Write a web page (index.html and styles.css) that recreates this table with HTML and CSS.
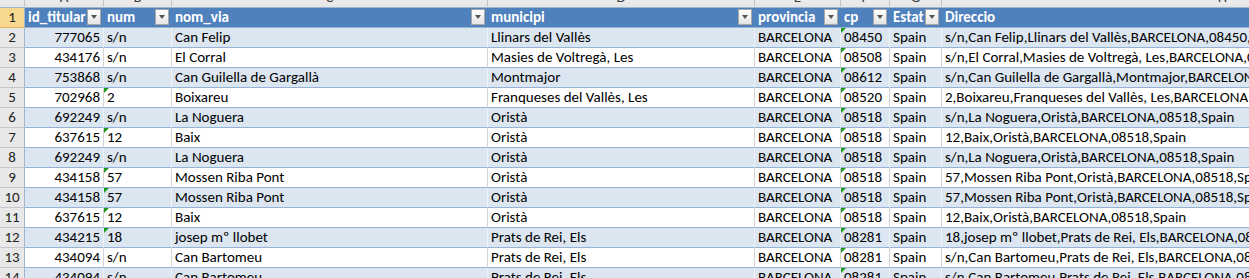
FILE: index.html
```html
<!DOCTYPE html>
<html>
<head>
<meta charset="utf-8">
<link rel="stylesheet" href="styles.css">
</head>
<body>
<div class="sheet">
  <div class="row colhead">
    <div class="corner"></div>
    <div class="ch">A</div><div class="ch">B</div><div class="ch">C</div><div class="ch">D</div>
    <div class="ch">E</div><div class="ch">F</div><div class="ch">G</div><div class="ch">H</div>
  </div>
  <div class="row hdr">
    <div class="rh sel">1</div>
    <div class="c th"><span>id_titular</span><span class="dd"></span></div>
    <div class="c th"><span>num</span><span class="dd"></span></div>
    <div class="c th"><span>nom_via</span><span class="dd"></span></div>
    <div class="c th"><span>municipi</span><span class="dd"></span></div>
    <div class="c th"><span>provincia</span><span class="dd"></span></div>
    <div class="c th"><span>cp</span><span class="dd"></span></div>
    <div class="c th"><span>Estat</span><span class="dd"></span></div>
    <div class="c th"><span>Direccio</span></div>
  </div>
  <div class="row band">
    <div class="rh">2</div><div class="c n">777065</div><div class="c">s/n</div><div class="c">Can Felip</div><div class="c">Llinars del Vallès</div><div class="c">BARCELONA</div><div class="c err">08450</div><div class="c">Spain</div><div class="c">s/n,Can Felip,Llinars del Vallès,BARCELONA,08450,Spain</div>
  </div>
  <div class="row">
    <div class="rh">3</div><div class="c n">434176</div><div class="c">s/n</div><div class="c">El Corral</div><div class="c">Masies de Voltregà, Les</div><div class="c">BARCELONA</div><div class="c err">08508</div><div class="c">Spain</div><div class="c">s/n,El Corral,Masies de Voltregà, Les,BARCELONA,08508,Spain</div>
  </div>
  <div class="row band">
    <div class="rh">4</div><div class="c n">753868</div><div class="c">s/n</div><div class="c">Can Guilella de Gargallà</div><div class="c">Montmajor</div><div class="c">BARCELONA</div><div class="c err">08612</div><div class="c">Spain</div><div class="c">s/n,Can Guilella de Gargallà,Montmajor,BARCELONA,08612,Spain</div>
  </div>
  <div class="row">
    <div class="rh">5</div><div class="c n">702968</div><div class="c err">2</div><div class="c">Boixareu</div><div class="c">Franqueses del Vallès, Les</div><div class="c">BARCELONA</div><div class="c err">08520</div><div class="c">Spain</div><div class="c">2,Boixareu,Franqueses del Vallès, Les,BARCELONA,08520,Spain</div>
  </div>
  <div class="row band">
    <div class="rh">6</div><div class="c n">692249</div><div class="c">s/n</div><div class="c">La Noguera</div><div class="c">Oristà</div><div class="c">BARCELONA</div><div class="c err">08518</div><div class="c">Spain</div><div class="c">s/n,La Noguera,Oristà,BARCELONA,08518,Spain</div>
  </div>
  <div class="row">
    <div class="rh">7</div><div class="c n">637615</div><div class="c err">12</div><div class="c">Baix</div><div class="c">Oristà</div><div class="c">BARCELONA</div><div class="c err">08518</div><div class="c">Spain</div><div class="c">12,Baix,Oristà,BARCELONA,08518,Spain</div>
  </div>
  <div class="row band">
    <div class="rh">8</div><div class="c n">692249</div><div class="c">s/n</div><div class="c">La Noguera</div><div class="c">Oristà</div><div class="c">BARCELONA</div><div class="c err">08518</div><div class="c">Spain</div><div class="c">s/n,La Noguera,Oristà,BARCELONA,08518,Spain</div>
  </div>
  <div class="row">
    <div class="rh">9</div><div class="c n">434158</div><div class="c err">57</div><div class="c">Mossen Riba Pont</div><div class="c">Oristà</div><div class="c">BARCELONA</div><div class="c err">08518</div><div class="c">Spain</div><div class="c">57,Mossen Riba Pont,Oristà,BARCELONA,08518,Spain</div>
  </div>
  <div class="row band">
    <div class="rh">10</div><div class="c n">434158</div><div class="c err">57</div><div class="c">Mossen Riba Pont</div><div class="c">Oristà</div><div class="c">BARCELONA</div><div class="c err">08518</div><div class="c">Spain</div><div class="c">57,Mossen Riba Pont,Oristà,BARCELONA,08518,Spain</div>
  </div>
  <div class="row">
    <div class="rh">11</div><div class="c n">637615</div><div class="c err">12</div><div class="c">Baix</div><div class="c">Oristà</div><div class="c">BARCELONA</div><div class="c err">08518</div><div class="c">Spain</div><div class="c">12,Baix,Oristà,BARCELONA,08518,Spain</div>
  </div>
  <div class="row band">
    <div class="rh">12</div><div class="c n">434215</div><div class="c err">18</div><div class="c">josep mº llobet</div><div class="c">Prats de Rei, Els</div><div class="c">BARCELONA</div><div class="c err">08281</div><div class="c">Spain</div><div class="c">18,josep mº llobet,Prats de Rei, Els,BARCELONA,08281,Spain</div>
  </div>
  <div class="row">
    <div class="rh">13</div><div class="c n">434094</div><div class="c">s/n</div><div class="c">Can Bartomeu</div><div class="c">Prats de Rei, Els</div><div class="c">BARCELONA</div><div class="c err">08281</div><div class="c">Spain</div><div class="c">s/n,Can Bartomeu,Prats de Rei, Els,BARCELONA,08281,Spain</div>
  </div>
  <div class="row band">
    <div class="rh">14</div><div class="c n">434094</div><div class="c">s/n</div><div class="c">Can Bartomeu</div><div class="c">Prats de Rei, Els</div><div class="c">BARCELONA</div><div class="c err">08281</div><div class="c">Spain</div><div class="c">s/n,Can Bartomeu,Prats de Rei, Els,BARCELONA,08281,Spain</div>
  </div>
</div>
</body>
</html>
```
FILE: styles.css
```css
html, body {
  margin: 0;
  padding: 0;
  background: #ffffff;
  overflow: hidden;
}
.sheet {
  --cols: 25px 79px 68px 316px 267px 86px 49px 52px 562px;
  width: 1504px;
  margin-top: -12px;
  font-family: Carlito, Calibri, Lato, sans-serif;
  font-size: 15px;
  color: #000;
}
.row {
  display: grid;
  grid-template-columns: var(--cols);
  height: 20px;
}
.row > div {
  box-sizing: border-box;
  height: 20px;
  line-height: 19px;
  white-space: nowrap;
  overflow: hidden;
}
.colhead > div {
  background: linear-gradient(#f6f6f6, #e6e6e6);
  border-right: 1px solid #c2c6cc;
  border-bottom: 1px solid #9eb6ce;
  text-align: center;
  color: #3c3c3c;
}
.rh {
  background: #e8e8e8;
  border-right: 1px solid #9eb6ce;
  border-bottom: 1px solid #c5c9cf;
  text-align: center;
  color: #222;
}
.rh.sel {
  background: #f8d78e;
  border-bottom-color: #e2b45c;
  color: #222;
}
.c {
  position: relative;
  padding: 0 3px;
  border-right: 1px solid #d4d4d4;
  border-bottom: 1px solid #95b3d7;
}
.band .c {
  background: #dce6f1;
  border-right-color: #eef2f8;
}
.c.n {
  text-align: right;
}
.hdr .c.th {
  background: #4f81bd;
  border-right: 0;
  border-bottom: 1px solid #95b3d7;
  color: #fff;
  font-weight: bold;
  display: flex;
  align-items: flex-start;
  justify-content: space-between;
}
.dd {
  flex: none;
  box-sizing: border-box;
  width: 14px;
  height: 16px;
  margin-top: 1px;
  margin-right: 0;
  border: 1px solid #a8a8a8;
  background: linear-gradient(#ffffff, #e4e4e4);
  display: flex;
  align-items: center;
  justify-content: center;
}
.dd::after {
  content: "";
  width: 0;
  height: 0;
  border-left: 3.5px solid transparent;
  border-right: 3.5px solid transparent;
  border-top: 4px solid #555;
}
.c.err::before {
  content: "";
  position: absolute;
  left: 0;
  top: 0;
  width: 0;
  height: 0;
  border-top: 5px solid #1c9a1c;
  border-right: 5px solid transparent;
}
```
